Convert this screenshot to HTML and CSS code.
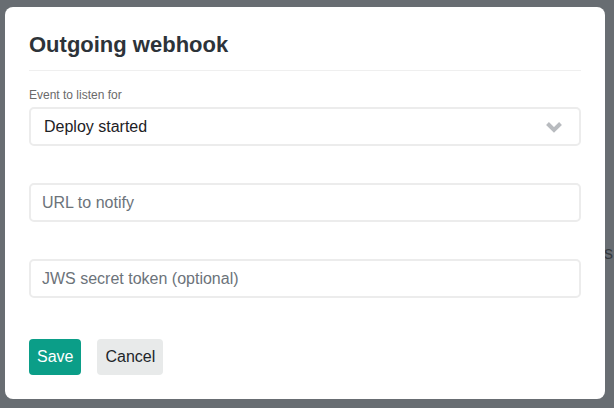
FILE: index.html
```html
<!DOCTYPE html>
<html>
<head>
<meta charset="utf-8">
<link rel="stylesheet" href="styles.css">
<title>Outgoing webhook</title>
</head>
<body>
<div class="page">
  <p class="page-line">Deploy notifications</p>
</div>
<div class="backdrop"></div>
<div class="modal">
  <h2 class="modal-title">Outgoing webhook</h2>
  <form class="form">
    <div class="field field-first">
      <label class="label">Event to listen for</label>
      <div class="select">
        <span class="select-value">Deploy started</span>
        <svg class="chevron" width="18" height="12" viewBox="0 0 18 12"><path d="M2.5 2.5 L9 9 L15.5 2.5" fill="none" stroke="#b8bbbf" stroke-width="4" stroke-linejoin="miter" stroke-linecap="butt"/></svg>
      </div>
    </div>
    <div class="field">
      <input class="input" type="text" placeholder="URL to notify">
    </div>
    <div class="field">
      <input class="input" type="text" placeholder="JWS secret token (optional)">
    </div>
    <div class="actions">
      <button type="button" class="btn btn-save">Save</button>
      <button type="button" class="btn btn-cancel">Cancel</button>
    </div>
  </form>
</div>
</body>
</html>
```
FILE: styles.css
```css
html, body {
  margin: 0;
  padding: 0;
  background: #ffffff;
  font-family: "Liberation Sans", Arial, sans-serif;
  width: 614px;
  height: 408px;
  overflow: hidden;
}
.page {
  padding: 243px 1px 0 0;
}
.page-line {
  margin: 0;
  text-align: right;
  font-size: 18px;
  line-height: 20px;
  color: #000000;
}
.backdrop {
  position: absolute;
  left: 0;
  top: 0;
  width: 614px;
  height: 408px;
  background: rgba(66, 73, 79, 0.8);
}
.modal {
  position: absolute;
  left: 5px;
  top: 7px;
  width: 600px;
  height: 392px;
  box-sizing: border-box;
  background: #ffffff;
  border-radius: 8px;
  padding: 25px 24px 24px 24px;
}
.modal-title {
  margin: 0;
  font-size: 22px;
  line-height: 26px;
  font-weight: bold;
  color: #2d3339;
  padding-bottom: 12px;
  border-bottom: 1px solid #efefef;
}
.form {
  margin: 0;
  padding-top: 17px;
}
.field {
  margin-top: 37px;
}
.field-first {
  margin-top: 0;
}
.label {
  display: block;
  font-size: 12px;
  line-height: 14px;
  color: #6a6a6a;
  margin-bottom: 5px;
}
.select {
  height: 39px;
  box-sizing: border-box;
  border: 2px solid #ececec;
  border-radius: 5px;
  display: flex;
  align-items: center;
  justify-content: space-between;
  padding: 0 16px 0 13px;
}
.select-value {
  font-size: 16px;
  color: #1d2125;
}
.chevron {
  display: block;
}
.input {
  display: block;
  width: 100%;
  height: 39px;
  box-sizing: border-box;
  border: 2px solid #ececec;
  border-radius: 5px;
  padding: 0 11px;
  font-family: "Liberation Sans", Arial, sans-serif;
  font-size: 16px;
  color: #1d2125;
  background: #fff;
  outline: none;
}
.input::placeholder {
  color: #6c737a;
}
.actions {
  margin-top: 41px;
  display: flex;
  gap: 16px;
}
.btn {
  height: 36px;
  border: none;
  border-radius: 4px;
  padding: 0 8px;
  font-family: "Liberation Sans", Arial, sans-serif;
  font-size: 16px;
  cursor: pointer;
}
.btn-save {
  background: #0b9e88;
  color: #ffffff;
}
.btn-cancel {
  background: #e8eaea;
  color: #212529;
}
```
